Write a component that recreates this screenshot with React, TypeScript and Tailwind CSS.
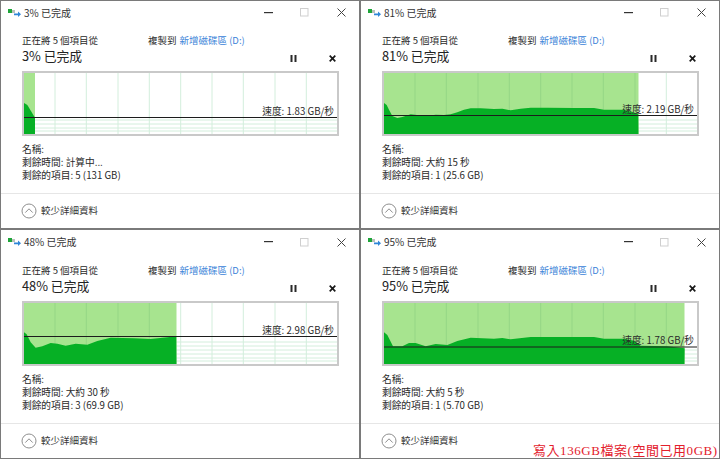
import React from "react";

const GRID_X = [31, 62.3, 94, 125.3, 156.7, 188, 219.3, 251, 282.3];
const GRID_Y = [35, 39, 43, 47, 51, 55, 58];

type WinProps = {
  pct: string;
  fillX: number;
  curve: [number, number][];
  lineY: number;
  speed: string;
  time: string;
  items: string;
  lower?: boolean;
};

function Chart({ fillX, curve, lineY }: { fillX: number; curve: [number, number][]; lineY: number }) {
  const pts = curve.map(([x, y]) => `${x},${y}`).join(" ");
  return (
    <svg width="313" height="61" viewBox="0 0 313 61" className="block">
      <rect width="313" height="61" fill="#ffffff" />
      {GRID_X.map((x) => (
        <line key={x} x1={x} x2={x} y1="0" y2="61" stroke="#d3eedc" strokeWidth="1" />
      ))}
      {GRID_Y.filter((y) => y > lineY + 2).map((y) => (
        <line key={y} x1="0" x2="313" y1={y} y2={y} stroke="#d3eedc" strokeWidth="1" />
      ))}
      <rect width={fillX} height="61" fill="#a7e48f" />
      {GRID_X.filter((x) => x < fillX).map((x) => (
        <line key={x} x1={x} x2={x} y1="0" y2="61" stroke="#95d685" strokeWidth="1" />
      ))}
      <polygon points={`0,61 ${pts} ${fillX},61`} fill="#06b025" />
      <line x1="0" x2="313" y1={lineY} y2={lineY} stroke="#1c1c1c" strokeWidth="1" />
    </svg>
  );
}

function Win({ pct, fillX, curve, lineY, speed, time, items, lower }: WinProps) {
  return (
    <div className="flex flex-col bg-white text-[#2a2a2a] min-h-0">
      <div className={lower ? "h-[24px] flex items-center" : "h-[23px] flex items-center"}>
        <svg width="14" height="10" viewBox="0 0 14 10" className="ml-[7px] shrink-0">
          <rect x="0" y="1" width="4" height="4" fill="#1fa53a" />
          <rect x="4" y="2" width="3" height="3" fill="#b9c2bb" />
          <path d="M6 5.5h4V3.5l3 2.8-3 2.8V7.2H6z" fill="#2f86d8" />
        </svg>
        <span className="ml-[2px] text-[10px] leading-none text-[#333]">{pct} 已完成</span>
        <div className="flex-1" />
        <svg width="9" height="2" className="mr-[27px]"><rect width="9" height="1.2" fill="#333" /></svg>
        <svg width="9" height="9" className="mr-[28px]"><rect x=".5" y=".5" width="7.5" height="7.5" fill="none" stroke="#cfcfcf" /></svg>
        <svg width="9" height="9" viewBox="0 0 9 9" className="mr-[13px]"><path d="M.5.5l8 8M8.5.5l-8 8" stroke="#444" strokeWidth="1" /></svg>
      </div>
      <div className="mt-[10px] h-[14px] flex items-center text-[9.5px] leading-none">
        <span className="ml-[21px] w-[126px]">正在將 5 個項目從</span>
        <span>複製到</span>
        <span className="ml-[3px] text-[#3a82d8]">新增磁碟區 (D:)</span>
      </div>
      <div className="h-[16px] flex items-center">
        <span className="ml-[21px] text-[12.8px] leading-none text-[#222]">{pct} 已完成</span>
        <div className="flex-1" />
        <svg width="7" height="7" viewBox="0 0 7 7" className="mr-[32px] mt-[4px]"><rect x="0.5" width="2" height="7" fill="#2a2a2a" /><rect x="4.5" width="2" height="7" fill="#2a2a2a" /></svg>
        <svg width="7" height="7" viewBox="0 0 7 7" className="mr-[23px] mt-[4px]"><path d="M.7.7l5.6 5.6M6.3.7L.7 6.3" stroke="#1a1a1a" strokeWidth="1.7" /></svg>
      </div>
      <div className="relative mt-[7px] ml-[21px] w-[317px] h-[65px] border-2 border-[#c9c9c9]">
        <Chart fillX={fillX} curve={curve} lineY={lineY} />
        <span
          className="absolute right-[3px] text-[9.7px] leading-none whitespace-nowrap text-[#2a2a2a]"
          style={{ top: lineY - 11 }}
        >
          速度: {speed}
        </span>
      </div>
      <div className="mt-[7px] ml-[21px] text-[9.7px] leading-[13px]">
        <div>名稱:</div>
        <div>剩餘時間: {time}</div>
        <div>剩餘的項目: {items}</div>
      </div>
      <div className="mt-[11px] flex-1 border-t border-[#e6e6e6] flex items-center">
        <svg width="16" height="16" viewBox="0 0 16 16" className="ml-[20px] shrink-0">
          <circle cx="8" cy="8" r="7" fill="none" stroke="#8f8f8f" strokeWidth="1" />
          <path d="M4.3 9.6L8 5.8l3.7 3.8" fill="none" stroke="#8f8f8f" strokeWidth="1" />
        </svg>
        <span className="ml-[4px] text-[9.5px] leading-none text-[#333]">較少詳細資料</span>
      </div>
    </div>
  );
}

const toPts = (arr: number[][], top: number): [number, number][] =>
  arr.map(([x, y]) => [(x - 70) / 3, (y - top) / 3]);

const c3 = toPts([[70, 308], [80, 314], [103, 352]], 218);
const c81 = toPts(
  [[70, 308], [78, 314], [85, 328], [95, 347], [110, 353], [125, 350], [150, 342], [175, 345], [200, 347], [225, 343], [250, 344], [270, 342], [290, 336], [310, 328], [330, 324], [360, 324], [400, 326], [425, 325], [450, 330], [480, 325], [510, 322], [560, 322], [640, 323], [700, 323], [730, 328], [790, 328], [833, 340]],
  218
);
const c48 = toPts(
  [[70, 310], [78, 316], [90, 340], [105, 356], [125, 352], [150, 342], [170, 344], [195, 350], [225, 344], [260, 347], [290, 336], [330, 326], [400, 328], [450, 330], [500, 325], [527, 322]],
  222
);
const c95 = toPts(
  [[70, 310], [80, 318], [97, 352], [125, 352], [145, 342], [165, 342], [195, 352], [225, 345], [260, 348], [290, 336], [330, 326], [400, 329], [425, 327], [450, 331], [510, 324], [640, 324], [700, 324], [730, 329], [790, 329], [820, 335], [840, 350], [920, 352], [972, 358]],
  222
);

export default function App() {
  return (
    <div
      className="relative w-[720px] h-[459px] overflow-hidden bg-[#7a7a7a] p-[1px] grid grid-cols-[358px_358px] grid-rows-[227px_228px] gap-[2px]"
      style={{ fontFamily: '"Noto Sans CJK TC", "Noto Sans", sans-serif' }}
    >
      <Win pct="3%" fillX={11} curve={c3} lineY={44.5} speed="1.83 GB/秒" time="計算中..." items="5 (131 GB)" />
      <Win pct="81%" fillX={254.5} curve={c81} lineY={42.5} speed="2.19 GB/秒" time="大約 15 秒" items="1 (25.6 GB)" />
      <Win pct="48%" fillX={152.5} curve={c48} lineY={33.5} speed="2.98 GB/秒" time="大約 30 秒" items="3 (69.9 GB)" lower />
      <Win pct="95%" fillX={300.5} curve={c95} lineY={44} speed="1.78 GB/秒" time="大約 5 秒" items="1 (5.70 GB)" lower />
      <span
        className="absolute left-[533px] top-[443px] text-[13px] leading-[16px] whitespace-nowrap text-[#e3202c] tracking-[0.55px]"
        style={{ fontFamily: '"Liberation Serif", "Noto Sans CJK TC", serif' }}
      >
        寫入136GB檔案(空間已用0GB)
      </span>
    </div>
  );
}
